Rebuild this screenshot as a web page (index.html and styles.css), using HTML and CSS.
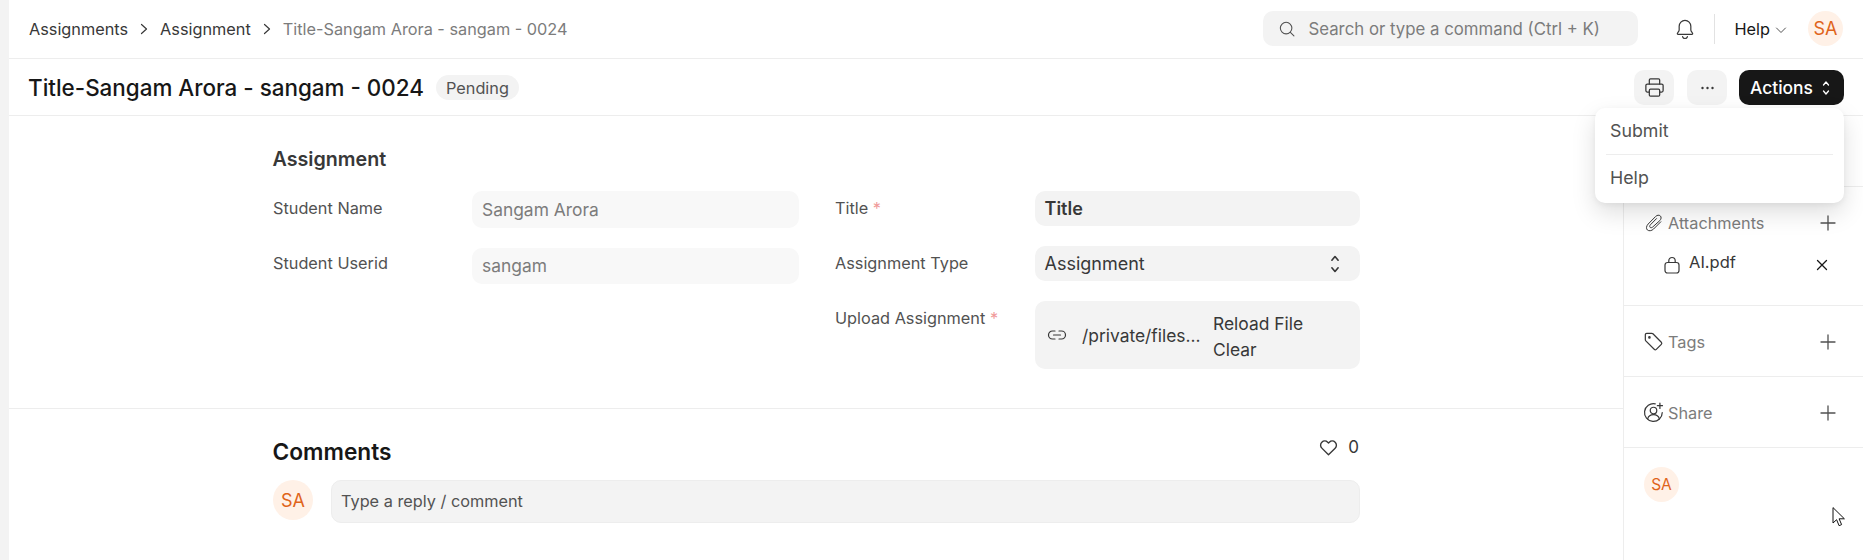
FILE: index.html
```html
<!DOCTYPE html>
<html lang="en">
<head>
<meta charset="utf-8">
<title>Title-Sangam Arora - sangam - 0024</title>
<link rel="stylesheet" href="styles.css">
</head>
<body>
<div class="app">
  <div class="rail"></div>
  <div class="page">
    <header class="nav">
      <nav class="crumbs">
        <a>Assignments</a>
        <svg class="crumb-sep" viewBox="0 0 8 12"><path d="M1.500 1.500 6.500 6l-5 4.500"/></svg>
        <a>Assignment</a>
        <svg class="crumb-sep" viewBox="0 0 8 12"><path d="M1.500 1.500 6.500 6l-5 4.500"/></svg>
        <span class="crumb-current">Title-Sangam Arora - sangam - 0024</span>
      </nav>
      <div class="nav-right">
        <div class="search">
          <svg class="search-icon" viewBox="0 0 18 18"><circle cx="8" cy="8" r="6.500"/><path d="m12.800 12.800 4 4"/></svg>
          <span>Search or type a command (Ctrl + K)</span>
        </div>
        <svg class="bell" viewBox="0 0 20 20"><path d="M10 2.200a5.300 5.300 0 0 0-5.300 5.300v3.300c0 1.500-1.700 2.400-1.700 3.600 0 .3.200.5.600.5h12.800c.4 0 .6-.2.600-.5 0-1.200-1.700-2.100-1.700-3.600V7.500A5.300 5.300 0 0 0 10 2.200Z"/><path d="M7.800 17a2.300 2.300 0 0 0 4.400 0"/></svg>
        <div class="nav-divider"></div>
        <div class="help">Help
          <svg class="help-caret" viewBox="0 0 12 8"><path d="m1.500 2 4.500 4.500L10.500 2"/></svg>
        </div>
        <div class="avatar">SA</div>
      </div>
    </header>

    <div class="titlebar">
      <h1 class="doc-title">Title-Sangam Arora - sangam - 0024</h1>
      <span class="badge">Pending</span>
      <div class="title-actions">
        <button class="icon-btn print-btn">
          <svg class="print-icon" viewBox="0 0 20 20"><path d="M5.500 7V3.500a1 1 0 0 1 1-1h7a1 1 0 0 1 1 1V7"/><path d="M5.500 14H3.800a1.300 1.300 0 0 1-1.300-1.300V8.300A1.300 1.300 0 0 1 3.800 7h12.400a1.300 1.300 0 0 1 1.300 1.300v4.400a1.300 1.300 0 0 1-1.300 1.300h-1.700"/><rect x="5.500" y="11.500" width="9" height="6" rx="1"/></svg>
        </button>
        <button class="icon-btn">
          <svg class="dots-icon" viewBox="0 0 14 4"><circle cx="2" cy="2" r="1.200"/><circle cx="7" cy="2" r="1.200"/><circle cx="12" cy="2" r="1.200"/></svg>
        </button>
        <button class="primary-btn">Actions
          <svg class="updown light" viewBox="0 0 8 16"><path d="M1.500 5 4 2l2.500 3M1.500 11 4 14l2.500-3"/></svg>
        </button>
      </div>
    </div>

    <div class="content">
      <main class="main">
        <section class="form-section">
          <h2 class="section-title">Assignment</h2>
          <div class="form-columns">
            <div class="form-col">
              <div class="field">
                <label class="field-label">Student Name</label>
                <div class="control control-disabled tall">Sangam Arora</div>
              </div>
              <div class="field">
                <label class="field-label label-tight">Student Userid</label>
                <div class="control control-disabled short">sangam</div>
              </div>
            </div>
            <div class="form-col">
              <div class="field">
                <label class="field-label">Title <span class="req">*</span></label>
                <div class="control control-bold">Title</div>
              </div>
              <div class="field">
                <label class="field-label">Assignment Type</label>
                <div class="control control-select">Assignment
                  <svg class="updown updown-lg" viewBox="0 0 8 16"><path d="M1.500 5 4 2l2.500 3M1.500 11 4 14l2.500-3"/></svg>
                </div>
              </div>
              <div class="field">
                <label class="field-label">Upload Assignment <span class="req">*</span></label>
                <div class="control control-file">
                  <svg class="link-icon" viewBox="0 0 20 12"><path d="M8 2H5.500a4 4 0 0 0 0 8H8M12 2h2.500a4 4 0 0 1 0 8H12M6.500 6h7"/></svg>
                  <span class="file-name">/private/files...</span>
                  <div class="file-actions">
                    <span>Reload File</span>
                    <span>Clear</span>
                  </div>
                </div>
              </div>
            </div>
          </div>
        </section>
        <section class="comments">
          <div class="comments-head">
            <h2 class="comments-title">Comments</h2>
            <div class="likes">
              <svg class="heart" viewBox="0 0 18 16"><path d="M9 14.800 2.700 8.600a3.900 3.900 0 0 1 0-5.600 3.900 3.900 0 0 1 5.500 0l.8.800.8-.8a3.900 3.900 0 0 1 5.500 0 3.900 3.900 0 0 1 0 5.600L9 14.800Z"/></svg>
              <span>0</span>
            </div>
          </div>
          <div class="comment-row">
            <div class="avatar avatar-lg">SA</div>
            <div class="comment-box">Type a reply / comment</div>
          </div>
        </section>
      </main>

      <aside class="side">
        <div class="side-block side-top"></div>
        <div class="side-block side-attach">
          <div class="side-row">
            <svg class="side-icon clip" viewBox="0 0 18 18"><path d="M15.800 7.800 8.600 15c-2 2-4.800 2.200-6.200 1s-1.200-4 .8-6l7.400-7.500c1.500-1.500 3.500-1.700 4.700-.6s1 3.200-.5 4.700L7.700 13c-.8.800-2 .9-2.600.4s-.5-1.800.3-2.600l6.100-6.200"/></svg>
            <span class="side-label">Attachments</span>
            <svg class="plus" viewBox="0 0 16 16"><path d="M8 1v14M1 8h14"/></svg>
          </div>
          <div class="file-row">
            <svg class="lock" viewBox="0 0 16 18"><rect x="1" y="6.500" width="14" height="10.500" rx="2.500"/><path d="M4.800 6.500V4.700a3.200 3.200 0 0 1 6.400 0v1.800"/></svg>
            <span class="file-title">AI.pdf</span>
            <svg class="close" viewBox="0 0 12 12"><path d="m1.500 1.500 9 9M10.500 1.500l-9 9"/></svg>
          </div>
        </div>
        <div class="side-block side-line">
          <div class="side-row">
            <svg class="side-icon" viewBox="0 0 18 18"><path d="M2 3.200C2 2.500 2.500 2 3.200 2h4.300c.4 0 .7.100 1 .4l7.200 7.200a1.300 1.300 0 0 1 0 1.800l-4.300 4.300a1.300 1.300 0 0 1-1.800 0L2.400 8.500a1.400 1.400 0 0 1-.4-1Z"/><circle cx="5.500" cy="5.500" r=".6"/></svg>
            <span class="side-label">Tags</span>
            <svg class="plus" viewBox="0 0 16 16"><path d="M8 1v14M1 8h14"/></svg>
          </div>
        </div>
        <div class="side-block side-line">
          <div class="side-row">
            <svg class="side-icon" viewBox="0 0 18 18"><path d="M16.500 9A7.600 7.600 0 1 1 10.500 1.600"/><circle cx="9" cy="7.300" r="2.800"/><path d="M4 14.500c.6-2.200 2.600-3.600 5-3.600s4.400 1.400 5 3.600"/><path d="M14.500 1v4.500M12.300 3.200h4.400"/></svg>
            <span class="side-label">Share</span>
            <svg class="plus" viewBox="0 0 16 16"><path d="M8 1v14M1 8h14"/></svg>
          </div>
        </div>
        <div class="side-viewers">
          <div class="avatar">SA</div>
        </div>
      </aside>
    </div>
  </div>
</div>

<div class="menu">
  <div class="menu-item">Submit</div>
  <div class="menu-divider"></div>
  <div class="menu-item">Help</div>
</div>

<svg class="cursor" viewBox="0 0 13 20"><path d="M1 1v15l3.600-3.300 2.500 6 2.500-1.100-2.500-5.800H12Z"/></svg>
</body>
</html>
```

FILE: styles.css
```css
* { box-sizing: border-box; }
html, body { margin: 0; padding: 0; height: 560px; overflow: hidden; background: #fff; }
body { font-family: Inter, "Liberation Sans", sans-serif; font-size: 16.300px; color: #383838; position: relative; }
svg { display: block; flex: none; fill: none; stroke: #383838; stroke-width: 1.2; stroke-linecap: round; stroke-linejoin: round; }
h1, h2 { margin: 0; }

.app { display: flex; height: 560px; }
.rail { width: 9px; flex: none; background: #f3f3f3; }
.page { flex: 1; min-width: 0; display: flex; flex-direction: column; }

.nav { height: 59px; flex: none; display: flex; align-items: center; justify-content: space-between; border-bottom: 1px solid #ededed; padding: 0 20px 1px 20px; }
.crumbs { display: flex; align-items: center; font-size: 16.300px; color: #383838; }
.crumb-sep { width: 8px; height: 12px; margin: 0 12px; stroke: #383838; }
.crumb-current { color: #7c7c7c; }
.nav-right { display: flex; align-items: center; }
.search { width: 375px; height: 35px; background: #f3f3f3; border-radius: 10px; display: flex; align-items: center; padding-left: 16px; color: #7c7c7c; font-size: 16.800px; }
.search-icon { width: 16px; height: 16px; margin-right: 13px; stroke: #525252; }
.bell { width: 22px; height: 22px; margin-left: 36px; stroke-width: 1.100; }
.nav-divider { width: 1px; height: 30px; background: #e2e2e2; margin: 0 19px 0 18px; }
.help { display: flex; align-items: center; font-size: 16.300px; color: #171717; }
.help-caret { width: 12px; height: 8px; margin: 2px 0 0 5px; stroke: #525252; stroke-width: 1; }
.avatar { width: 35px; height: 35px; border-radius: 50%; background: #fff1e7; color: #e0641a; font-size: 15.500px; display: flex; align-items: center; justify-content: center; flex: none; }
.nav .avatar { margin-left: 21px; font-size: 18px; }
.avatar-lg { width: 40px; height: 40px; font-size: 18px; }

.titlebar { height: 57px; flex: none; display: flex; align-items: center; border-bottom: 1px solid #ededed; padding: 1px 19px 0 19px; }
.doc-title { font-size: 22.430px; font-weight: 500; color: #171717; line-height: 28px; }
.badge { margin-left: 12px; height: 25px; width: 83px; justify-content: center; background: #f3f3f3; border-radius: 13px; color: #525252; font-size: 16.300px; display: flex; align-items: center; }
.title-actions { margin-left: auto; display: flex; gap: 12px; }
.print-btn { margin-right: 1px; }
.icon-btn { width: 40px; height: 35px; border: 0; background: #f3f3f3; border-radius: 10px; padding: 0; display: flex; align-items: center; justify-content: center; }
.print-icon { width: 23px; height: 23px; stroke: #383838; stroke-width: 1.100; }
.dots-icon { width: 15px; height: 4px; fill: #383838; stroke: none; }
.primary-btn { width: 105px; height: 35px; border: 0; border-radius: 10px; background: #171717; color: #fff; font: 500 17.400px Inter, sans-serif; display: flex; align-items: center; gap: 9px; padding: 0 0 0 11px; }
.updown { width: 8px; height: 16px; stroke: #383838; stroke-width: 1.300; }
.updown-lg { width: 10px; height: 20px; }
.updown.light { stroke: #fff; }

.content { flex: 1; display: flex; min-height: 0; }
.main { width: 1614px; flex: none; display: flex; flex-direction: column; }
.form-section { height: 293px; flex: none; border-bottom: 1px solid #ededed; padding: 31px 0 0 264px; }
.section-title { font-size: 19.700px; font-weight: 600; color: #383838; line-height: 24px; margin-bottom: 20px; margin-left: -.5px; }
.form-columns { display: grid; grid-template-columns: 525px 525px; gap: 37px; }
.form-col { display: flex; flex-direction: column; gap: 20px; }
.field { display: grid; grid-template-columns: 200px 325px; }
.field-label { font-size: 16.300px; color: #525252; line-height: 18px; padding-top: 7.500px; }
.label-tight { padding-top: 6px; }
.req { color: #f09a9a; }
.control { height: 35px; background: #f3f3f3; border-radius: 10px; padding: 0 10px; display: flex; align-items: center; font-size: 18px; color: #383838; }
.control-disabled { background: #f8f8f8; color: #7c7c7c; margin: 0 -1px; font-size: 17.400px; padding-bottom: 1px; }
.tall { height: 37px; }
.short { height: 36px; }
.control-bold { font-weight: 600; padding-left: 9.500px; }
.control-select { justify-content: space-between; padding-left: 9.500px; padding-right: 20px; }
.control-file { height: 68px; padding: 0 0 0 12px; font-size: 17.400px; }
.link-icon { width: 20px; height: 12px; margin-right: 15px; stroke: #383838; }
.file-name { width: 117px; white-space: nowrap; flex: none; }
.file-actions { display: flex; flex-direction: column; margin: 4px 0 0 14px; line-height: 26px; }

.comments { padding: 32px 0 0 264px; width: 1351px; }
.comments-head { display: flex; justify-content: space-between; align-items: flex-start; height: 39px; }
.comments-title { font-size: 22.700px; font-weight: 600; color: #171717; line-height: 22px; margin-left: -.5px; }
.likes { display: flex; align-items: center; gap: 10px; font-size: 17px; color: #383838; line-height: 20px; margin: -4px 1px 0 0; }
.heart { width: 19px; height: 17px; stroke-width: 1.300; }
.comment-row { display: flex; gap: 18px; }
.comment-box { flex: 1; height: 43px; background: #f3f3f3; border: 1px solid #ededed; border-radius: 10px; padding: 0 9px 1px; display: flex; align-items: center; font-size: 16.300px; color: #525252; }

.side { flex: 1; min-width: 0; border-left: 1px solid #ededed; display: flex; flex-direction: column; }
.side-block { border-bottom: 1px solid #ededed; flex: none; padding: 0 27px 0 21px; display: flex; flex-direction: column; justify-content: center; }
.side-top { height: 71px; }
.side-attach { height: 119px; justify-content: flex-start; padding-top: 28px; }
.side-line { height: 71px; padding-top: 1px; }
.side-row { display: flex; align-items: center; height: 16px; }
.side-icon { width: 21px; height: 21px; margin: 0 4px 0 -2px; stroke: #383838; stroke-width: 1.050; }
.clip { width: 18px; height: 18px; margin: 0 5px 0 0; stroke: #383838; stroke-width: 1; }
.side-label { font-size: 16.300px; color: #7c7c7c; }
.plus { width: 16px; height: 16px; margin-left: auto; stroke: #525252; stroke-width: 1.300; }
.file-row { display: flex; align-items: center; margin-top: 21px; padding-left: 19px; height: 20px; }
.lock { width: 16px; height: 18px; margin: 5px 9px 0 0; stroke: #383838; }
.file-title { font-size: 16.500px; color: #383838; }
.close { width: 12px; height: 12px; margin: 5px 8px 0 auto; stroke: #171717; stroke-width: 1.300; }
.side-viewers { padding: 19px 0 0 20px; }

.menu { position: absolute; left: 1595px; top: 108px; width: 249px; height: 95px; background: #fff; border-radius: 10px; box-shadow: 0 2px 6px rgba(0,0,0,.05), 0 10px 24px rgba(0,0,0,.13); padding: 0 11px; display: flex; flex-direction: column; }
.menu-item { height: 46px; display: flex; align-items: center; padding: 0 0 1px 4px; font-size: 17.800px; color: #525252; }
.menu-divider { height: 1px; background: #ededed; flex: none; }

.cursor { position: absolute; left: 1832px; top: 507px; width: 13px; height: 20px; fill: #fff; stroke: #111; stroke-width: 1; }
```
